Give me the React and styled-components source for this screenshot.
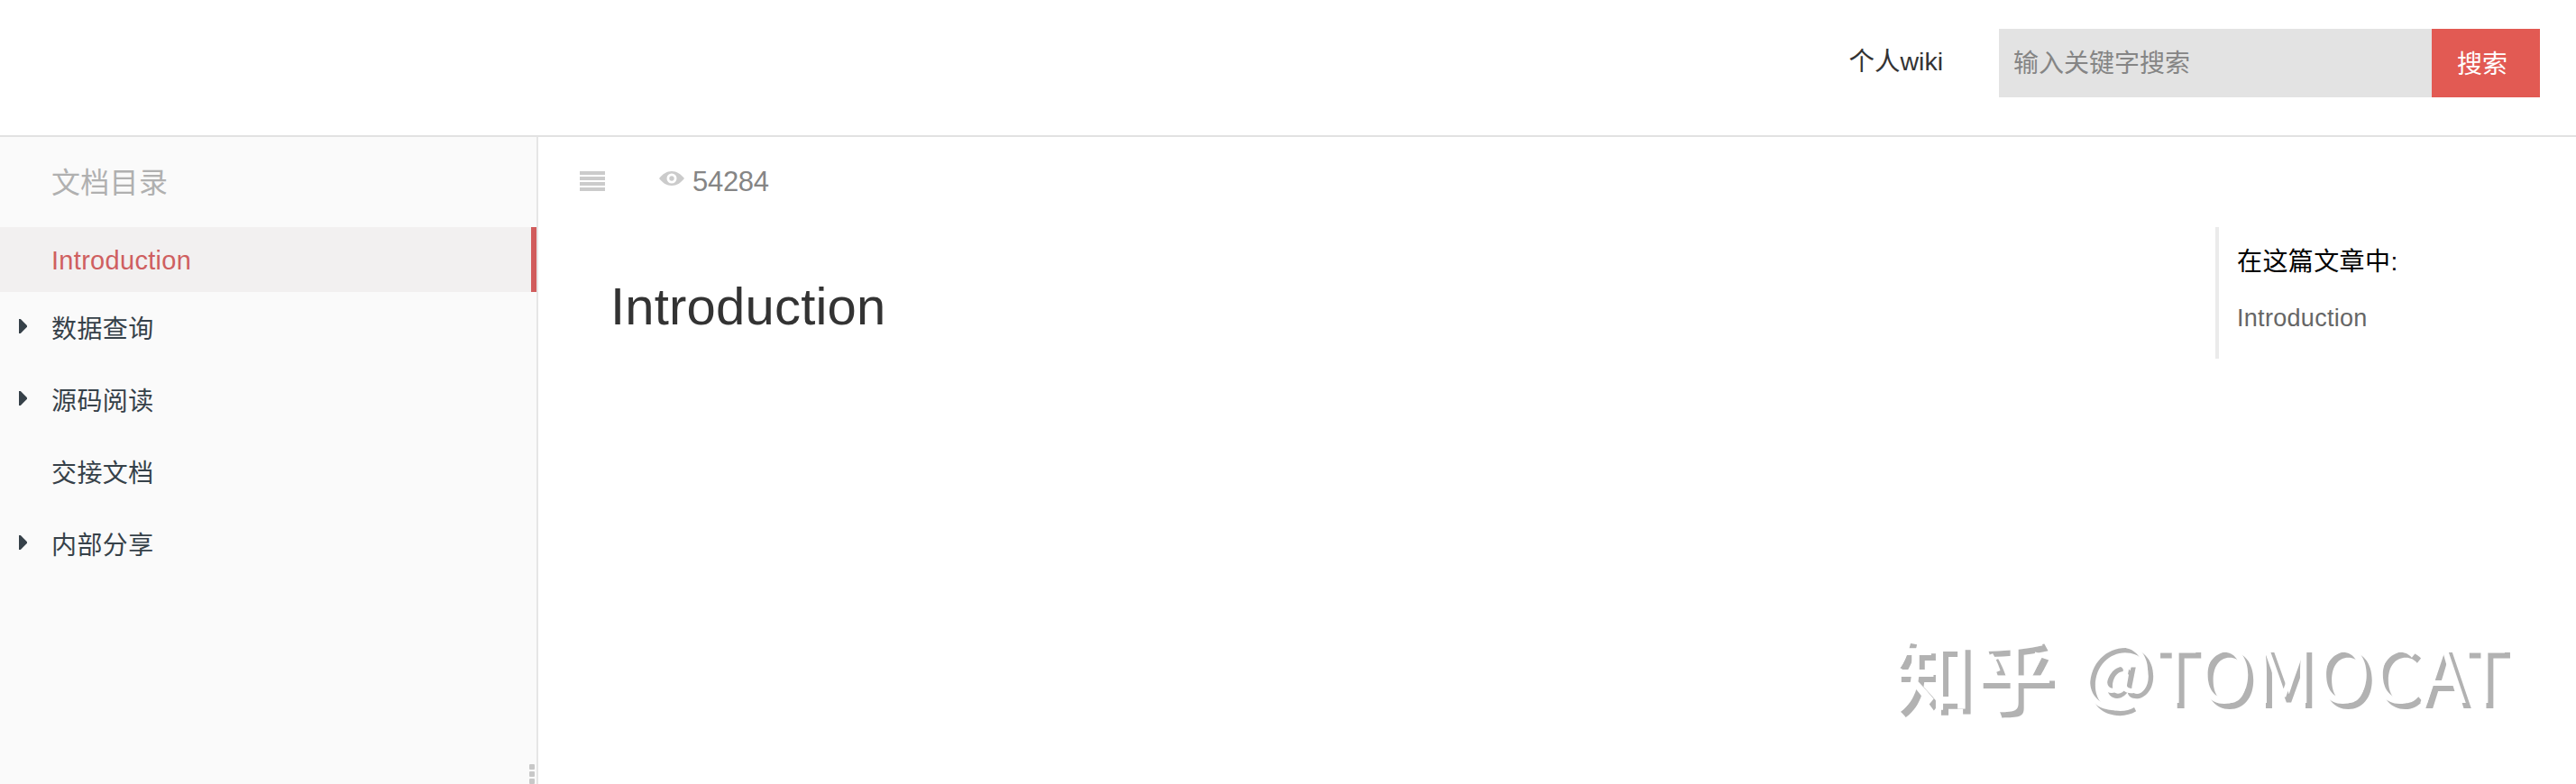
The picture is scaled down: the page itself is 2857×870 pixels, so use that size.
import styled, { createGlobalStyle } from "styled-components";

const sidebarItems = [
  { title: "Introduction", active: true },
  { title: "数据查询", expandable: true },
  { title: "源码阅读", expandable: true },
  { title: "交接文档" },
  { title: "内部分享", expandable: true },
];

const App = () => {
  return (
    <>
      <GlobalStyle />
      <Page>
        <Header>
          <NavLink href="#">个人wiki</NavLink>
          <SearchForm onSubmit={(e) => e.preventDefault()}>
            <SearchInput type="text" placeholder="输入关键字搜索" />
            <SearchButton type="submit">搜索</SearchButton>
          </SearchForm>
        </Header>
        <Body>
          <Sidebar>
            <SidebarTitle>文档目录</SidebarTitle>
            <nav>
              {sidebarItems.map(({ title, active, expandable }) => (
                <SidebarLink href="#" key={title} $active={active}>
                  <ArrowSlot>{expandable && <Arrow />}</ArrowSlot>
                  <span>{title}</span>
                </SidebarLink>
              ))}
            </nav>
            <ResizeHandle>
              <i />
              <i />
              <i />
            </ResizeHandle>
          </Sidebar>
          <Content>
            <Toolbar>
              <MenuIcon viewBox="0 0 28 22">
                <path d="M0 0h28v4H0zM0 6h28v4H0zM0 12h28v4H0zM0 18h28v4H0z" />
              </MenuIcon>
              <EyeIcon viewBox="0 0 28 16">
                <path
                  fillRule="evenodd"
                  d="M0 8C4 3 8.500 0 14 0s10 3 14 8c-4 5-8.500 8-14 8S4 13 0 8zM14 2.500a5.500 5.500 0 1 0 0 11a5.500 5.500 0 0 0 0-11z"
                />
                <circle cx="14" cy="8" r="2.700" />
              </EyeIcon>
              <Views>54284</Views>
            </Toolbar>
            <Article>
              <h1>Introduction</h1>
              <Toc>
                <h4>在这篇文章中:</h4>
                <a href="#">Introduction</a>
              </Toc>
            </Article>
          </Content>
        </Body>
        <Watermark>
          <b>知乎</b> <span>@</span>TOMOCAT
        </Watermark>
      </Page>
    </>
  );
};

const GlobalStyle = createGlobalStyle`
  * {
    box-sizing: border-box;
    margin: 0;
    padding: 0;
  }

  body {
    font-family: "Liberation Sans", "Noto Sans CJK SC", sans-serif;
    font-size: 28px;
    color: #333;
    background-color: #fff;
  }

  a {
    color: inherit;
    text-decoration: none;
  }
`;

const Page = styled.div`
  position: relative;
  display: flex;
  flex-direction: column;
  height: 100vh;
  overflow: hidden;
`;

const Header = styled.header`
  display: flex;
  flex: none;
  justify-content: flex-end;
  align-items: flex-start;
  height: 152px;
  padding: 32px 40px 0 0;
  border-bottom: 2px solid #e2e2e2;
`;

const NavLink = styled.a`
  margin-right: 62px;
  font-size: 28.5px;
  line-height: 72px;
`;

const SearchForm = styled.form`
  display: flex;
  height: 76px;
`;

const SearchInput = styled.input`
  width: 480px;
  padding: 2px 16px 0;
  border: none;
  background-color: #e3e3e3;
  font: inherit;

  &::placeholder {
    color: #858585;
    opacity: 1;
  }
`;

const SearchButton = styled.button`
  width: 120px;
  padding: 0 8px 3px 0;
  border: none;
  background-color: #e25a53;
  color: #fff;
  font: inherit;
`;

const Body = styled.div`
  display: flex;
  flex: 1;
  min-height: 0;
`;

const Sidebar = styled.aside`
  position: relative;
  flex: none;
  width: 597px;
  border-right: 2px solid #e6e6e6;
  background-color: #fafafa;
`;

const SidebarTitle = styled.h3`
  height: 100px;
  padding-left: 57px;
  color: #b0b0b0;
  font-size: 32px;
  font-weight: 400;
  line-height: 102px;
  letter-spacing: 0.3px;
`;

const SidebarLink = styled.a`
  display: flex;
  align-items: center;
  height: ${({ $active }) => ($active ? "72px" : "80px")};
  padding: ${({ $active }) => ($active ? "2px 0 0" : "0 0 3px")};
  border-right: ${({ $active }) => ($active ? "6px solid #d15c5c" : "none")};
  background-color: ${({ $active }) => ($active ? "#f2f0f0" : "transparent")};
  color: ${({ $active }) => ($active ? "#cf5f60" : "#364149")};
  font-size: ${({ $active }) => ($active ? "29px" : "28px")};
  letter-spacing: ${({ $active }) => ($active ? "0.3px" : "0.4px")};
`;

const ArrowSlot = styled.span`
  flex: none;
  width: 57px;
  padding-left: 21px;
`;

const Arrow = styled.span`
  display: block;
  width: 9px;
  height: 16px;
  margin-bottom: 1px;
  background-color: #364149;
  clip-path: polygon(0 0, 20% 0, 100% 45%, 100% 55%, 20% 100%, 0 100%);
`;

const ResizeHandle = styled.div`
  position: absolute;
  right: 2px;
  bottom: 0;
  display: grid;
  gap: 2px;

  i {
    width: 6px;
    height: 6px;
    border-radius: 1px;
    background-color: #c8c8c8;
  }
`;

const Content = styled.main`
  flex: 1;
`;

const Toolbar = styled.div`
  display: flex;
  align-items: flex-start;
  height: 100px;
  padding: 38px 0 0 46px;
  fill: #cbcbcb;
`;

const MenuIcon = styled.svg`
  width: 28px;
  height: 22px;
  margin-right: 60px;
`;

const EyeIcon = styled.svg`
  width: 28px;
  height: 16px;
`;

const Views = styled.span`
  margin-left: 9px;
  color: #858585;
  font-size: 31px;
  line-height: 24px;
  letter-spacing: -0.3px;
`;

const Article = styled.article`
  display: flex;
  justify-content: space-between;
  padding: 0 42px 0 80px;

  h1 {
    padding-top: 55px;
    font-size: 58px;
    font-weight: 400;
    line-height: 65px;
    letter-spacing: 0.2px;
  }
`;

const Toc = styled.aside`
  width: 358px;
  height: 146px;
  padding: 17px 0 0 20px;
  border-left: 4px solid #ebebeb;

  h4 {
    color: #000;
    font-size: 28px;
    font-weight: 400;
    line-height: 44px;
    letter-spacing: 0.4px;
  }

  a {
    display: block;
    margin-top: 20px;
    color: #666;
    font-size: 27px;
    line-height: 40px;
    letter-spacing: 0.3px;
  }
`;

const Watermark = styled.div`
  position: absolute;
  right: 76px;
  bottom: 66px;
  color: #fff;
  font-family: "Noto Sans CJK SC", sans-serif;
  font-size: 84px;
  line-height: 120px;
  letter-spacing: 0.4px;
  white-space: nowrap;
  text-shadow: 6px 6px 0 #b2b2b2;

  b {
    position: relative;
    top: 2px;
    margin-right: 9px;
    font-size: 88px;
    font-weight: 500;
    letter-spacing: 2px;
  }

  /* the at sign is lifted to centre on the capitals */
  span {
    position: relative;
    top: -6px;
  }
`;

export default App;
